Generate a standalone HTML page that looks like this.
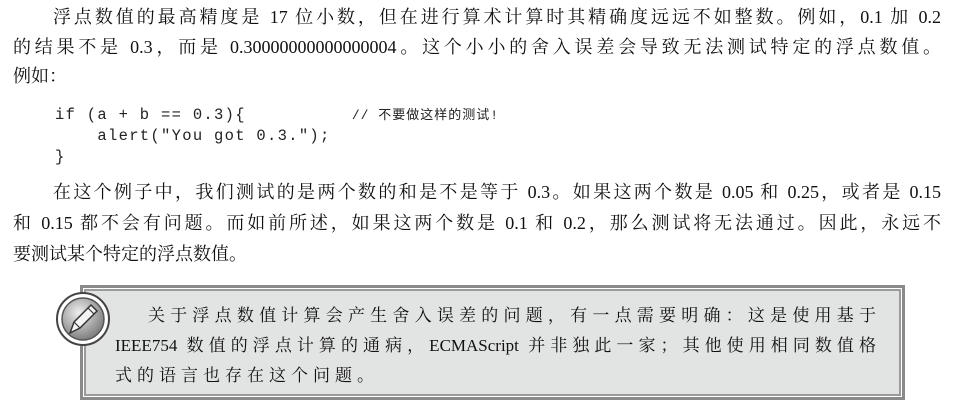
<!DOCTYPE html>
<html><head><meta charset="utf-8"><style>
body{margin:0;width:962px;height:404px;background:#fff;position:relative;overflow:hidden;color:#111}
.l{position:absolute;font-family:"Liberation Serif","Noto Serif CJK SC",serif;font-size:18px;line-height:22px;white-space:nowrap;text-align:justify;text-align-last:justify;overflow:hidden}
.c{position:absolute;font-family:"Liberation Mono","Noto Sans CJK SC",monospace;font-size:15.5px;letter-spacing:1.3px;line-height:18px;white-space:pre;color:#222}
.c span{font-size:13px;letter-spacing:1px}
.box{position:absolute;left:80px;top:285px;width:817px;height:107px;border:3px solid #8a8a8a;background:#fff;padding:1px}
.inner{width:100%;height:100%;border:2px solid #9a9a9a;background:#e2e3e3;box-sizing:border-box}
.b{position:absolute;font-family:"Liberation Serif","Noto Serif CJK SC",serif;font-size:17px;line-height:22px;white-space:nowrap;text-align:justify;text-align-last:justify;color:#111}
</style></head><body>
<div class="l" style="left:53px;top:6px;width:888px">浮点数值的最高精度是 17 位小数，但在进行算术计算时其精确度远远不如整数。例如，0.1 加 0.2</div>
<div class="l" style="left:13px;top:36px;width:928px">的结果不是 0.3，而是 0.30000000000000004。这个小小的舍入误差会导致无法测试特定的浮点数值。</div>
<div class="l" style="left:13px;top:65px;text-align-last:auto">例如：</div>
<div class="c" style="left:55px;top:106px">if (a + b == 0.3){          <span>// 不要做这样的测试!</span></div>
<div class="c" style="left:55px;top:127px">    alert("You got 0.3.");</div>
<div class="c" style="left:55px;top:148px">}</div>
<div class="l" style="left:53px;top:181px;width:888px">在这个例子中，我们测试的是两个数的和是不是等于 0.3。如果这两个数是 0.05 和 0.25，或者是 0.15</div>
<div class="l" style="left:13px;top:212px;width:928px">和 0.15 都不会有问题。而如前所述，如果这两个数是 0.1 和 0.2，那么测试将无法通过。因此，永远不</div>
<div class="l" style="left:13px;top:243px;text-align-last:auto">要测试某个特定的浮点数值。</div>
<div class="box"><div class="inner"></div></div>
<svg style="position:absolute;left:55px;top:291px" width="56" height="56" viewBox="0 0 56 56">
<defs><radialGradient id="g" cx="0.4" cy="0.35" r="0.7"><stop offset="0" stop-color="#eee"/><stop offset="1" stop-color="#777"/></radialGradient></defs>
<circle cx="28" cy="28" r="26" fill="#fff" stroke="#444" stroke-width="2"/>
<circle cx="28" cy="28" r="21" fill="url(#g)" stroke="#555" stroke-width="1.5"/>
<path d="M15 42 L19 31 L36 14 L42 20 L25 37 Z" fill="#f4f4f4" stroke="#333" stroke-width="1.5"/>
<path d="M19 31 L25 37 M33 17 L39 23" stroke="#333" stroke-width="1.2" fill="none"/>
</svg>
<div class="b" style="left:148px;top:305px;width:728px">关于浮点数值计算会产生舍入误差的问题，有一点需要明确：这是使用基于</div>
<div class="b" style="left:115px;top:335px;width:761px">IEEE754 数值的浮点计算的通病，ECMAScript 并非独此一家；其他使用相同数值格</div>
<div class="b" style="left:115px;top:365px;letter-spacing:5px">式的语言也存在这个问题。</div>
</body></html>
